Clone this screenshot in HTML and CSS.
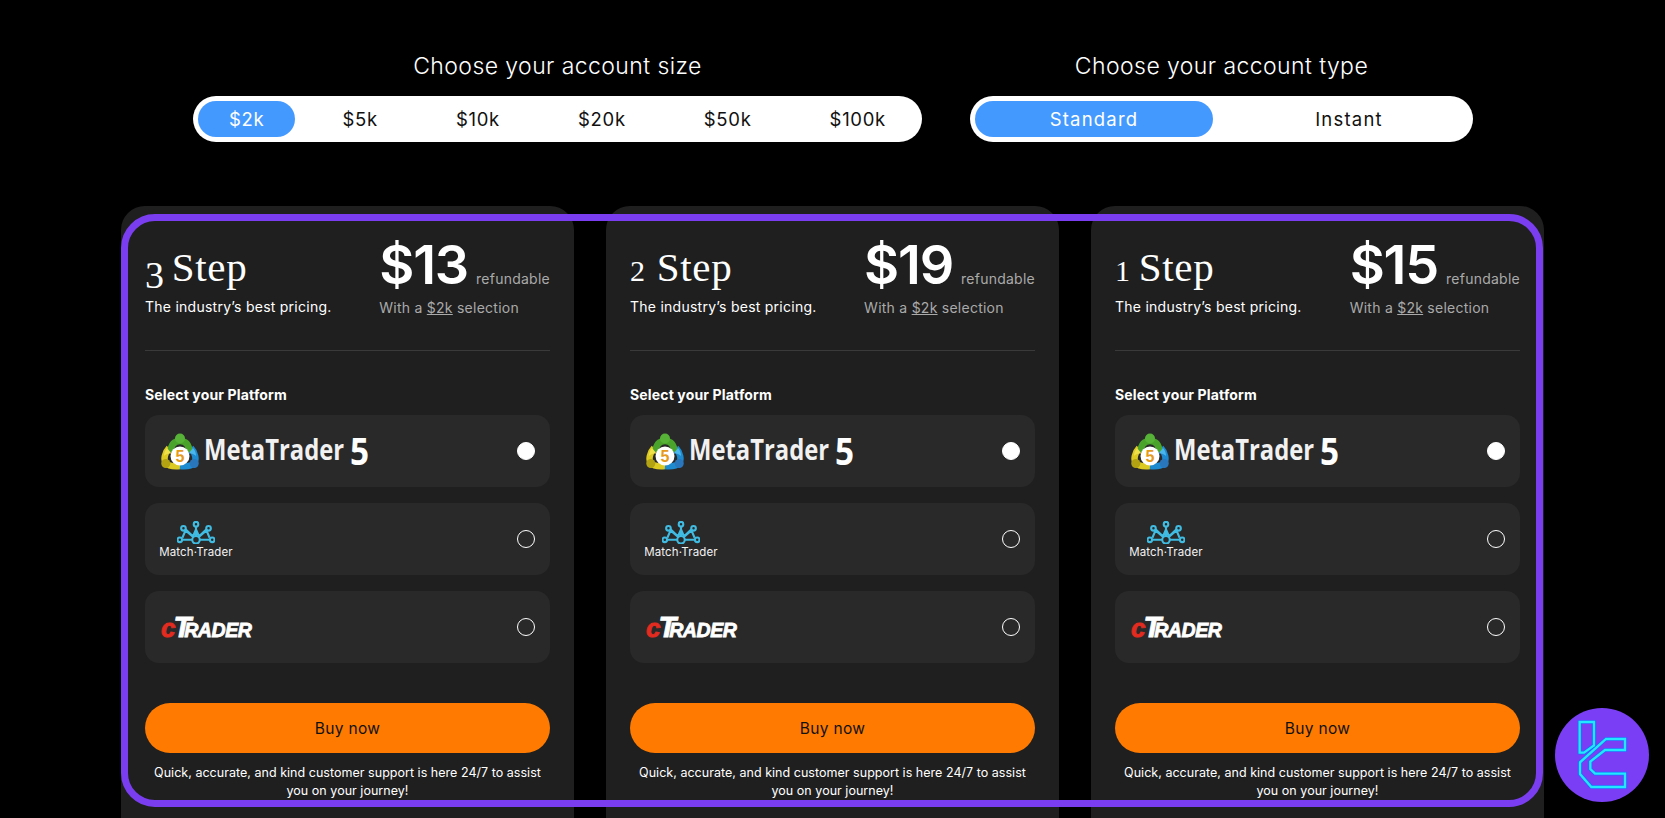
FILE: index.html
```html
<!DOCTYPE html>
<html lang="en">
<head>
<meta charset="utf-8">
<title>Choose your account</title>
<link rel="stylesheet" href="styles.css">
</head>
<body>
<svg class="defs" width="0" height="0" aria-hidden="true">
  <defs>
    <g id="mt5">
      <g fill="none" stroke-width="6.500">
        <path d="M8 15C4 19 2 27 5 30.500c3 3 8 3 14 2.500" stroke="#dcca22"/>
        <path d="M30 15c4 4 6 12 3 15.500-3 3-8 3-14 2.500" stroke="#1e8ad0"/>
        <path d="M9.500 19C10 11 14 8 19 8s9 3 9.500 11" stroke="#4aa42c"/>
      </g>
      <path d="M6 15c-2 2-3 5-3 8 2-2 5-3 8-2z" fill="#f0e04a"/>
      <path d="M32 15c2 2 3 5 3 8-2-2-5-3-8-2z" fill="#4ab6ec"/>
      <circle cx="19" cy="5.500" r="5" fill="#57b338"/>
      <circle cx="4.800" cy="30.500" r="4.500" fill="#b3a312"/>
      <circle cx="33.200" cy="30.500" r="4.500" fill="#2a76bd"/>
      <circle cx="19" cy="23" r="9.500" fill="#fff"/>
      <text x="19" y="28.500" class="mt5-five">5</text>
    </g>
    <g id="match" fill="none" stroke="#40bce2" stroke-width="2">
      <circle cx="18" cy="18" r="3.600"/>
      <circle cx="18" cy="3" r="2.200"/>
      <circle cx="6" cy="7" r="2.200"/>
      <circle cx="30" cy="7" r="2.200"/>
      <circle cx="2.500" cy="18" r="2.200"/>
      <circle cx="33.500" cy="18" r="2.200"/>
      <path d="M18 5v9.500M8 8l8 7.500M28 8l-8 7.500M4.700 18h9.700M31.300 18h-9.700M5 16l3-7 7 6M31 16l-3-7-7 6M15 15l3-7 3 7"/>
    </g>
  </defs>
</svg>

<main class="page">
  <section class="selectors">
    <div class="selector selector-size">
      <h2 class="selector-title">Choose your account size</h2>
      <div class="pill">
        <span class="pill-item pill-item-active">$2k</span>
        <span class="pill-item">$5k</span>
        <span class="pill-item">$10k</span>
        <span class="pill-item">$20k</span>
        <span class="pill-item">$50k</span>
        <span class="pill-item">$100k</span>
      </div>
    </div>
    <div class="selector selector-type">
      <h2 class="selector-title">Choose your account type</h2>
      <div class="pill">
        <span class="pill-item pill-item-wide pill-item-active">Standard</span>
        <span class="pill-item pill-item-wide">Instant</span>
      </div>
    </div>
  </section>

  <section class="cards">
    <article class="card">
      <header class="card-head">
        <div class="head-left">
          <h3 class="step"><span class="num num-3">3</span> Step</h3>
          <p class="tagline">The industry’s best pricing.</p>
        </div>
        <div class="head-right">
          <div class="price-line"><span class="price">$13</span><span class="refund">refundable</span></div>
          <p class="with">With a <u>$2k</u> selection</p>
        </div>
      </header>
      <hr class="divider">
      <h4 class="platform-title">Select your Platform</h4>
      <div class="rows">
        <div class="row"><div class="logo"><svg class="mt5-icon" width="38" height="37" viewBox="0 0 38 37"><use href="#mt5"/></svg><span class="mt5-name">MetaTrader</span><span class="mt5-num">5</span></div><span class="radio radio-on"></span></div>
        <div class="row"><div class="logo logo-match"><svg width="38" height="23" viewBox="0 0 36 22"><use href="#match"/></svg><span class="match-name">Match·Trader</span></div><span class="radio"></span></div>
        <div class="row"><div class="logo logo-ctrader"><span class="ct-c">c</span><span class="ct-t">T</span><span class="ct-r">RADER</span></div><span class="radio"></span></div>
      </div>
      <button class="buy">Buy now</button>
      <p class="support">Quick, accurate, and kind customer support is here 24/7 to assist you on your journey!</p>
    </article>

    <article class="card">
      <header class="card-head">
        <div class="head-left">
          <h3 class="step"><span class="num">2</span> Step</h3>
          <p class="tagline">The industry’s best pricing.</p>
        </div>
        <div class="head-right">
          <div class="price-line"><span class="price">$19</span><span class="refund">refundable</span></div>
          <p class="with">With a <u>$2k</u> selection</p>
        </div>
      </header>
      <hr class="divider">
      <h4 class="platform-title">Select your Platform</h4>
      <div class="rows">
        <div class="row"><div class="logo"><svg class="mt5-icon" width="38" height="37" viewBox="0 0 38 37"><use href="#mt5"/></svg><span class="mt5-name">MetaTrader</span><span class="mt5-num">5</span></div><span class="radio radio-on"></span></div>
        <div class="row"><div class="logo logo-match"><svg width="38" height="23" viewBox="0 0 36 22"><use href="#match"/></svg><span class="match-name">Match·Trader</span></div><span class="radio"></span></div>
        <div class="row"><div class="logo logo-ctrader"><span class="ct-c">c</span><span class="ct-t">T</span><span class="ct-r">RADER</span></div><span class="radio"></span></div>
      </div>
      <button class="buy">Buy now</button>
      <p class="support">Quick, accurate, and kind customer support is here 24/7 to assist you on your journey!</p>
    </article>

    <article class="card">
      <header class="card-head">
        <div class="head-left">
          <h3 class="step"><span class="num num-1">1</span> Step</h3>
          <p class="tagline">The industry’s best pricing.</p>
        </div>
        <div class="head-right">
          <div class="price-line"><span class="price">$15</span><span class="refund">refundable</span></div>
          <p class="with">With a <u>$2k</u> selection</p>
        </div>
      </header>
      <hr class="divider">
      <h4 class="platform-title">Select your Platform</h4>
      <div class="rows">
        <div class="row"><div class="logo"><svg class="mt5-icon" width="38" height="37" viewBox="0 0 38 37"><use href="#mt5"/></svg><span class="mt5-name">MetaTrader</span><span class="mt5-num">5</span></div><span class="radio radio-on"></span></div>
        <div class="row"><div class="logo logo-match"><svg width="38" height="23" viewBox="0 0 36 22"><use href="#match"/></svg><span class="match-name">Match·Trader</span></div><span class="radio"></span></div>
        <div class="row"><div class="logo logo-ctrader"><span class="ct-c">c</span><span class="ct-t">T</span><span class="ct-r">RADER</span></div><span class="radio"></span></div>
      </div>
      <button class="buy">Buy now</button>
      <p class="support">Quick, accurate, and kind customer support is here 24/7 to assist you on your journey!</p>
    </article>
  </section>
</main>

<div class="frame"></div>
<div class="badge">
  <svg width="94" height="94" viewBox="165 84 282 282">
    <circle cx="306" cy="225" r="141" fill="#7a3ff4"/>
    <g fill="none" stroke="#1a6cff" stroke-width="11">
      <path d="M239 126h43v70l-30 22h-13z"/>
      <path d="M375 177h-57l-78 70v35l34 39h101v-40h-90l-14-14v-22l44-35h60z"/>
    </g>
    <g fill="none" stroke="#22e8ff" stroke-width="7">
      <path d="M239 126h43v70l-30 22h-13z"/>
      <path d="M375 177h-57l-78 70v35l34 39h101v-40h-90l-14-14v-22l44-35h60z"/>
    </g>
  </svg>
</div>
</body>
</html>
```

FILE: styles.css
```css
* { box-sizing: border-box; }
html, body { margin: 0; padding: 0; height: 818px; overflow: hidden; background: #000; }
body { font-family: Inter, "Liberation Sans", sans-serif; color: #fff; position: relative; }
.defs { position: absolute; }
.page { padding: 0 0 0 121px; }

.selectors { display: flex; gap: 48px; padding: 50px 0 0 72px; }
.selector-size { width: 729px; }
.selector-type { width: 503px; }
.selector-title { margin: 0 0 14px; height: 32px; line-height: 32px; font-size: 23px; font-weight: 300; text-align: center; letter-spacing: 0.42px; }
.pill { display: flex; justify-content: space-between; height: 46px; padding: 5px; background: #fff; border-radius: 23px; }
.pill-item { display: flex; align-items: center; justify-content: center; padding: 0 31px; border-radius: 18px; color: #111; font-size: 18.5px; font-weight: 400; letter-spacing: 0.7px; }
.pill-item-wide { width: 238px; letter-spacing: 1.2px; }
.pill-item-active { background: #4499ff; color: #fff; }

.cards { display: flex; gap: 32px; margin-top: 64px; }
.card { width: 453px; height: 640px; flex: none; background: #1f1f1f; border-radius: 24px; padding: 0 24px; }
.card-head { display: flex; justify-content: space-between; height: 110px; padding-top: 34px; }
.step { margin: 7px 0 0; height: 40px; line-height: 40px; font-family: "Liberation Serif", serif; font-size: 41px; font-weight: 400; letter-spacing: 0.7px; }
.num { font-size: 30px; }
.num-3 { font-size: 38px; position: relative; top: 7px; letter-spacing: -3.3px; }
.num-1 { letter-spacing: -2.3px; }
.tagline { margin: 11px 0 0; font-size: 14px; line-height: 18px; letter-spacing: 0.25px; color: #fff; }
.price-line { display: flex; align-items: baseline; gap: 8px; height: 50px; line-height: 50px; }
.price { font-size: 54px; font-weight: 600; letter-spacing: -1.2px; }
.refund { font-size: 14px; letter-spacing: 0.25px; color: #aaa; }
.with { margin: 9px 0 0; font-size: 14px; line-height: 18px; letter-spacing: 0.25px; color: #aaa; }
.divider { margin: 34px 0 0; border: 0; border-top: 1px solid #3a3a3a; }
.platform-title { margin: 35px 0 0; font-size: 14px; line-height: 18px; font-weight: 700; letter-spacing: 0.15px; }
.rows { display: flex; flex-direction: column; gap: 16px; margin-top: 11px; }
.row { height: 72px; display: flex; align-items: center; justify-content: space-between; background: #292929; border-radius: 14px; padding: 0 15px 0 16px; }
.radio { width: 18px; height: 18px; flex: none; border: 1px solid #fff; border-radius: 50%; }
.radio-on { background: #fff; }

.logo { display: flex; align-items: center; }
.mt5-icon { flex: none; margin-right: 5px; }
.mt5-five { font-family: "Liberation Sans", sans-serif; font-size: 16px; font-weight: 700; fill: #e59a1a; text-anchor: middle; }
.mt5-name { width: 145px; font-family: "Open Sans", sans-serif; font-size: 28px; line-height: 36px; font-weight: 700; color: #f1f1f1; white-space: nowrap; transform: scaleX(0.85); transform-origin: left center; position: relative; top: -2px; }
.mt5-num { font-family: "Open Sans", sans-serif; font-size: 37px; line-height: 44px; font-weight: 700; transform: scaleX(0.9); }

.logo-match { flex-direction: column; gap: 2px; margin-left: -3px; width: 76px; }
.match-name { font-size: 11.5px; line-height: 12px; font-weight: 400; letter-spacing: 0.15px; color: #f2f2f2; white-space: nowrap; }

.logo-ctrader { font-family: "Liberation Sans", sans-serif; font-style: italic; font-weight: 700; align-items: baseline; margin-top: 1px; -webkit-text-stroke: 0.8px currentColor; }
.ct-c { font-size: 26px; letter-spacing: -2px; color: #e32b20; }
.ct-t { font-size: 29px; letter-spacing: -7px; color: #fff; }
.ct-r { font-size: 19.5px; color: #fff; letter-spacing: -0.4px; }

.buy { display: block; width: 100%; height: 50px; margin-top: 40px; border: 0; border-radius: 25px; background: #ff7a00; color: #111; font-family: inherit; font-size: 15.5px; font-weight: 400; letter-spacing: 0.35px; }
.support { margin: 11px 0 0; padding: 0 6px; font-size: 12.5px; line-height: 18px; letter-spacing: 0.03px; text-align: center; color: #fff; }

.frame { position: absolute; left: 121px; top: 214px; width: 1422px; height: 593px; border: 7px solid #7a3ef0; border-radius: 34px; pointer-events: none; }
.badge { position: absolute; left: 1555px; top: 708px; width: 94px; height: 94px; }
.badge svg { display: block; }
```
